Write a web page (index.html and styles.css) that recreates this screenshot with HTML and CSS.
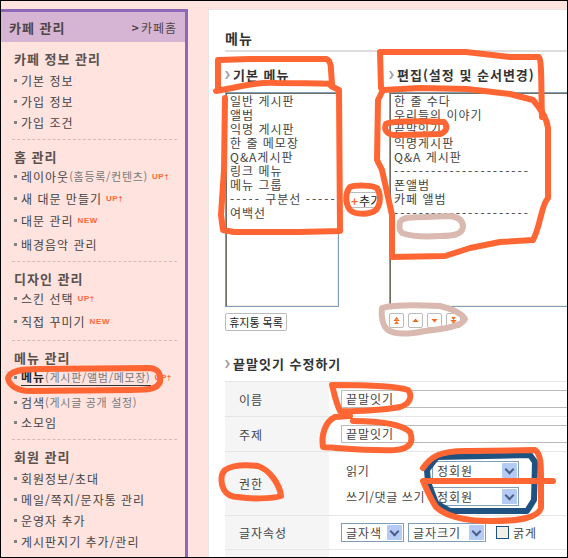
FILE: index.html
```html
<!DOCTYPE html>
<html lang="ko">
<head>
<meta charset="utf-8">
<title>메뉴 관리</title>
<link rel="stylesheet" href="styles.css">
</head>
<body>
<div class="frame">
  <aside class="sidebar">
    <div class="side-head"><strong>카페 관리</strong><span class="home"><b>&gt;</b>카페홈</span></div>
    <section class="group">
      <h3>카페 정보 관리</h3>
      <ul class="list pad">
        <li>기본 정보</li>
        <li>가입 정보</li>
        <li>가입 조건</li>
      </ul>
    </section>
    <section class="group dash">
      <h3>홈 관리</h3>
      <ul class="list">
        <li>레이아웃<small>(홈등록/컨텐츠)</small><em>UP†</em></li>
        <li class="mt2">새 대문 만들기<em>UP†</em></li>
        <li class="mt2">대문 관리<em>NEW</em></li>
        <li class="mt4">배경음악 관리</li>
      </ul>
    </section>
    <section class="group dash pb9">
      <h3>디자인 관리</h3>
      <ul class="list">
        <li>스킨 선택<em>UP†</em></li>
        <li class="mt3">직접 꾸미기<em>NEW</em></li>
      </ul>
    </section>
    <section class="group dash">
      <h3>메뉴 관리</h3>
      <ul class="list">
        <li><span class="active"><b>메뉴</b><small>(게시판/앨범/메모장)</small></span><em>UP†</em></li>
        <li class="mt5">검색<small>(게시글 공개 설정)</small></li>
        <li class="mt0">소모임</li>
      </ul>
    </section>
    <section class="group dash">
      <h3>회원 관리</h3>
      <ul class="list pad">
        <li>회원정보/초대</li>
        <li>메일/쪽지/문자통 관리</li>
        <li>운영자 추가</li>
        <li>게시판지기 추가/관리</li>
        <li>회원등급 관리</li>
      </ul>
    </section>
  </aside>

  <main class="panel">
    <h1 class="title">메뉴</h1>
    <div class="columns">
      <div class="col-left">
        <h2 class="sub"><i class="chev"></i>기본 메뉴</h2>
        <div class="listbox">
          <div>일반 게시판</div>
          <div>앨범</div>
          <div>익명 게시판</div>
          <div>한 줄 메모장</div>
          <div>Q&amp;A게시판</div>
          <div>링크 메뉴</div>
          <div>메뉴 그룹</div>
          <div><span class="dashes">-----</span> 구분선 <span class="dashes">-----</span></div>
          <div>여백선</div>
        </div>
        <div class="btn trash">휴지통 목록</div>
      </div>
      <div class="col-mid">
        <div class="btn add"><i class="plus">+</i>추가</div>
      </div>
      <div class="col-right">
        <h2 class="sub"><i class="chev"></i>편집(설정 및 순서변경)</h2>
        <div class="listbox wide">
          <div>한 줄 수다</div>
          <div>우리들의 이야기</div>
          <div>끝말잇기</div>
          <div>익명게시판</div>
          <div>Q&amp;A 게시판</div>
          <div class="dashes">----------------------</div>
          <div>폰앨범</div>
          <div>카페 앨범</div>
          <div class="dashes">----------------------</div>
        </div>
        <div class="order">
          <div class="mini"><svg viewBox="0 0 9 9"><path d="M4.500 0 7.500 3.500H1.500zM1 4h7v1H1zM4.500 5 7.500 9H1.500z" fill="#f26a1b"/></svg></div>
          <div class="mini"><svg viewBox="0 0 9 9"><path d="M4.500 2 8.500 6.500H.5z" fill="#f26a1b"/></svg></div>
          <div class="mini"><svg viewBox="0 0 9 9"><path d="M4.500 7 8.500 2.500H.5z" fill="#f26a1b"/></svg></div>
          <div class="mini"><svg viewBox="0 0 9 9"><path d="M4.500 4 7.500 0H1.500zM1 4h7v1H1zM4.500 9 7.500 5.500H1.500z" fill="#f26a1b"/></svg></div>
        </div>
      </div>
    </div>

    <h2 class="sub second"><i class="chev"></i>끝말잇기 수정하기</h2>
    <div class="table">
      <div class="row r35">
        <div class="th">이름</div>
        <div class="td"><div class="field">끝말잇기</div></div>
      </div>
      <div class="row r35">
        <div class="th">주제</div>
        <div class="td"><div class="field">끝말잇기</div></div>
      </div>
      <div class="row r64">
        <div class="th">권한</div>
        <div class="td stack">
          <div class="perm"><span class="perm-label">읽기</span><div class="select w87">정회원<i class="arrow"></i></div></div>
          <div class="perm"><span class="perm-label">쓰기/댓글 쓰기</span><div class="select w87">정회원<i class="arrow"></i></div></div>
        </div>
      </div>
      <div class="row r34">
        <div class="th">글자속성</div>
        <div class="td inline">
          <div class="select w63">글자색<i class="arrow"></i></div>
          <div class="select w78">글자크기<i class="arrow"></i></div>
          <span class="check"></span><span>굵게</span>
        </div>
      </div>
      <div class="row r34">
        <div class="th"></div>
        <div class="td"></div>
      </div>
    </div>
  </main>

  <svg class="marks" viewBox="0 0 568 558" aria-hidden="true">
    <g fill="none" stroke="#1f5280" stroke-width="6" stroke-linejoin="round">
      <path d="M427 470 L437 457 L530 455 L535 462 L534 500 L527 511 L450 511 L436 503 L428 482Z"/>
    </g>
    <g fill="none" stroke="#d9b9b0" stroke-width="6" stroke-linejoin="round" stroke-linecap="round">
      <path d="M400 222 C402 217 412 217 425 217 L450 216 C459 217 463 221 463 227 C462 234 455 236 440 236 C425 237 410 236 402 233 C399 230 399 226 400 222Z"/>
      <path d="M382 308 C395 304 420 305 440 306 C452 309 462 314 465 319 C462 326 445 329 425 331 C410 334 395 335 388 330 C382 326 381 314 382 308Z"/>
    </g>
    <g fill="none" stroke="#ff6633" stroke-width="6" stroke-linejoin="round" stroke-linecap="round">
      <path d="M8 378 C10 371 20 369 40 369 L150 368 C159 369 161 375 160 382 C157 389 150 390 130 390 L30 391 C18 391 9 386 8 378Z"/>
      <path d="M218 88 L218 60 L250 59 L326 59 C330 60 331 64 331 70 L332 84 C320 83 300 83 277 83 C260 82 245 85 232 88 L216 91"/>
      <path d="M331 86 L339 90 L340 231 L300 232 L234 232 L223 230 L221 215 L224 170 L225 98"/>
      <path d="M350 187 C355 185 372 185 377 188 C381 194 381 204 376 210 C370 215 355 215 350 210 C345 203 345 193 350 187Z"/>
      <path d="M381 88 L380 52 L466 52 L510 57 L539 57 C542 60 541 90 542 117"/>
      <path d="M383 90 L420 88 L467 89 L510 94 L533 100 C540 108 547 118 548 128 L548 198 C541 205 541 225 533 240 L500 242 L470 248 L445 256 L392 257 L392 215 L382 170 L377 160 L378 100Z"/>
      <path d="M386 124 C392 121 420 121 444 122 C448 126 447 132 440 134 L400 135 C388 136 383 131 386 124Z"/>
      <path d="M332 385 C350 385 395 385 408 390 C413 396 410 404 400 407 C385 410 350 412 340 411 C335 400 334 392 332 385Z"/>
      <path d="M353 421 C375 421 400 423 410 432 C414 442 410 449 395 450 C370 451 340 448 323 447 C321 435 325 422 335 417 L350 416"/>
      <path d="M222 475 C224 466 240 464 258 466 C270 470 280 485 281 496 C272 499 250 499 238 497 C224 497 220 485 222 475Z"/>
      <path d="M423 468 C430 458 438 450 470 451 L535 450 C541 454 541 465 541 480 L541 508 C538 518 520 521 490 521 C470 521 448 518 436 507 C430 498 426 488 423 481 L553 481"/>
    </g>
  </svg>
</div>
</body>
</html>
```
FILE: styles.css
```css
* { box-sizing: border-box; }
html, body { margin: 0; padding: 0; }
body {
  font-family: "Noto Sans CJK KR", "Liberation Sans", sans-serif;
  font-size: 12px;
  letter-spacing: 1px;
  color: #444;
}
.frame {
  position: relative;
  display: flex;
  align-items: flex-start;
  gap: 20px;
  width: 568px;
  height: 558px;
  overflow: hidden;
  background: #ffe3df;
  border: 1px solid #000;
}
.sidebar {
  flex: none;
  width: 187px;
  margin-top: 8px;
  min-height: 560px;
  border-top: 3px solid #8c68b8;
  border-right: 3px solid #8c68b8;
}
.side-head {
  display: flex;
  justify-content: space-between;
  align-items: center;
  height: 30px;
  padding: 0 8px;
  background: #d5b5d3;
  color: #4f4545;
}
.side-head strong { font-size: 13px; }
.home b { margin-right: 1px; }
.group {
  margin: 0 8px 0 11px;
  padding: 9px 0 7px 2px;
}
.group.dash { border-top: 1px dashed #d8b9b4; }
.group.pb9 { padding-bottom: 9px; }
h3 {
  margin: 0;
  font-size: 13px;
  line-height: 16px;
  font-weight: 700;
  color: #5a504c;
}
.list { list-style: none; margin: 0; padding: 0; }
.list.pad { padding-top: 2px; }
.list li {
  display: flex;
  align-items: center;
  height: 20px;
  margin-top: 1px;
  white-space: nowrap;
  color: #444;
}
.list li::before {
  content: "";
  flex: none;
  width: 3px;
  height: 3px;
  margin-right: 4px;
  background: #808080;
}
.list li.mt0 { margin-top: 0; }
.list li.mt2 { margin-top: 2px; }
.list li.mt3 { margin-top: 3px; }
.list li.mt4 { margin-top: 4px; }
.list li.mt5 { margin-top: 5px; }
.list small { font-size: 11px; letter-spacing: .7px; color: #777; }
.list em {
  margin-left: 4px;
  font-family: "Liberation Sans", sans-serif;
  font-style: normal;
  font-weight: 700;
  font-size: 8px;
  letter-spacing: .6px;
  color: #ff6633;
}
.active { border-bottom: 1px solid #333; line-height: 15px; }
.active b { color: #222; }

.panel {
  flex: 1 1 0;
  min-width: 0;
  height: 560px;
  margin-top: 8px;
  padding-left: 16px;
  overflow: hidden;
  background: #fff;
  border-top: 1px solid #e6e6e6;
  border-left: 1px solid #e6e6e6;
}
.title {
  margin: 0;
  padding: 20px 0 4px;
  font-size: 14px;
  line-height: 16px;
  font-weight: 700;
  color: #333;
  border-bottom: 2px solid #ddd;
}
.columns { display: flex; margin-top: 15px; }
.col-left { flex: none; width: 114px; }
.col-mid { flex: none; width: 50px; padding: 125px 0 0 8px; }
.col-right { flex: none; width: 220px; }
.sub {
  display: flex;
  align-items: center;
  margin: 0 0 9px;
  font-size: 13px;
  line-height: 16px;
  font-weight: 700;
  color: #333;
  white-space: nowrap;
}
.chev {
  flex: none;
  width: 5px;
  height: 8px;
  margin-right: 3px;
  background: #a5a5a5;
  clip-path: polygon(0 0, 40% 0, 100% 50%, 40% 100%, 0 100%, 50% 50%);
}
.sub.second { margin: 25px 0 9px; }
.listbox {
  height: 215px;
  padding: 1px 0 0 4px;
  border: 1px solid #7f9db9;
  box-shadow: inset 1px 1px 0 #716f64, inset -1px -1px 0 #f1efe2;
  line-height: 14px;
  color: #444;
  white-space: nowrap;
  overflow: hidden;
}
.dashes { letter-spacing: 2px; }
.btn {
  display: flex;
  align-items: center;
  justify-content: center;
  background: #fff;
  border: 1px solid #bbb;
  border-radius: 2px;
  white-space: nowrap;
  color: #222;
}
.trash { width: 62px; height: 18px; margin-top: 6px; font-size: 11px; letter-spacing: 0; }
.add {
  justify-content: flex-start;
  width: 31px;
  height: 16px;
  padding-left: 3px;
  overflow: hidden;
  font-size: 12px;
  letter-spacing: 0;
}
.plus { margin-right: 1px; font-style: normal; font-weight: 700; color: #ff6633; }
.order { display: flex; gap: 4px; margin-top: 6px; }
.mini {
  display: flex;
  align-items: center;
  justify-content: center;
  width: 15px;
  height: 15px;
  border: 1px solid #bbb;
  border-radius: 2px;
  background: #fff;
}
.mini svg { width: 7px; height: 7px; }

.table { width: 380px; }
.row {
  display: grid;
  grid-template-columns: 104px 1fr;
  border-top: 1px solid #e6e6e6;
}
.r35 { height: 35px; }
.r64 { height: 64px; }
.r34 { height: 34px; }
.th {
  display: flex;
  align-items: center;
  padding-left: 14px;
  background: #f5f5f5;
  color: #444;
}
.td {
  display: flex;
  align-items: center;
  padding-left: 12px;
  color: #444;
}
.field {
  width: 300px;
  height: 18px;
  padding-left: 4px;
  line-height: 16px;
  border: 1px solid #bbb;
}
.stack { flex-direction: column; align-items: flex-start; justify-content: center; gap: 7px; }
.perm { display: flex; align-items: center; }
.perm-label { width: 91px; padding-left: 5px; white-space: nowrap; letter-spacing: .6px; }
.select {
  display: flex;
  align-items: center;
  justify-content: space-between;
  height: 19px;
  padding: 0 1px 0 4px;
  border: 1px solid #7f9db9;
  background: #fff;
  white-space: nowrap;
  color: #444;
}
.w87 { width: 87px; }
.w63 { width: 63px; }
.w78 { width: 78px; }
.arrow {
  position: relative;
  flex: none;
  width: 15px;
  height: 15px;
  border-radius: 1px;
  background: #b4cbf6;
}
.arrow::after {
  content: "";
  position: absolute;
  left: 4px;
  top: 3px;
  width: 5px;
  height: 5px;
  border-right: 2px solid #4d6185;
  border-bottom: 2px solid #4d6185;
  transform: rotate(45deg);
}
.inline { gap: 4px; }
.check {
  width: 13px;
  height: 13px;
  margin-left: 6px;
  border: 1px solid #1f5280;
  background: #f1efe6;
}
.marks {
  position: absolute;
  left: -1px;
  top: -1px;
  width: 568px;
  height: 558px;
  pointer-events: none;
}
```
